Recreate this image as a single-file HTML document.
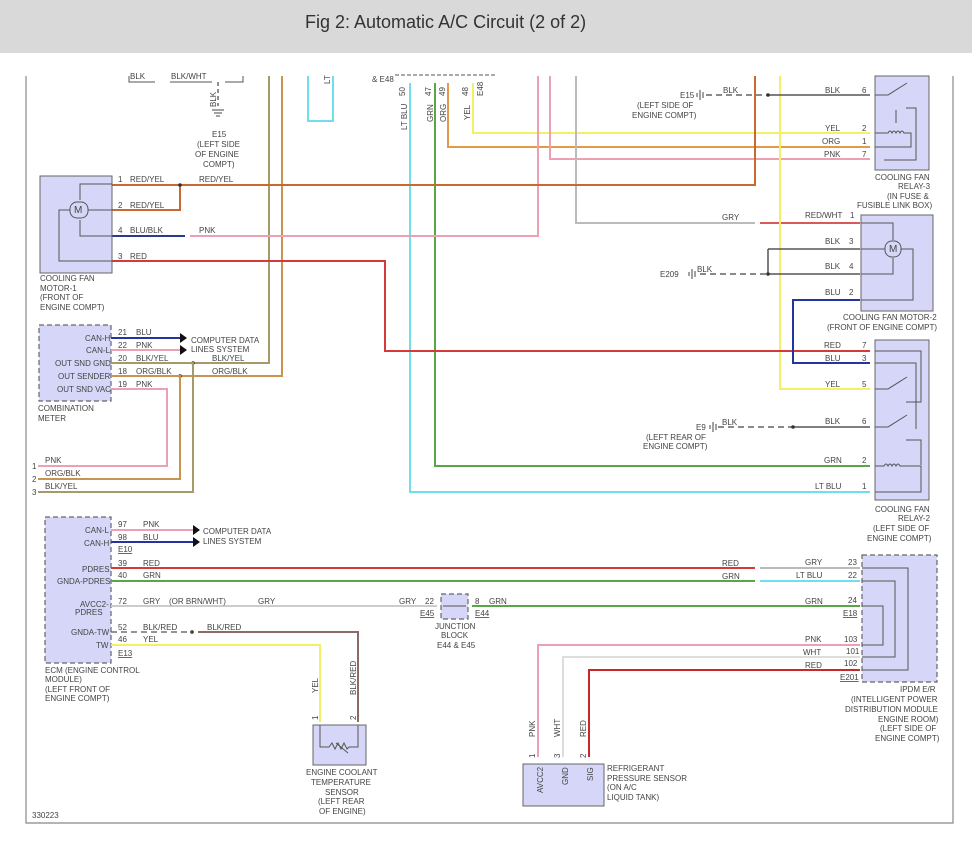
<!DOCTYPE html>
<html><head><meta charset="utf-8"><style>
html,body{margin:0;padding:0;background:#fff;}
.hdr{position:absolute;left:0;top:0;width:972px;height:53px;background:#d9d9d9;}
.hdr span{position:absolute;left:305px;top:12px;font:18px "Liberation Sans",sans-serif;color:#333;}
svg{position:absolute;left:0;top:0;}
text{font-family:"Liberation Sans",sans-serif;font-size:8px;fill:#444;}
.w{fill:none;stroke-width:2;}
.box{fill:#d6d6f8;stroke:#666;stroke-width:1;}
.dbox{fill:#d6d6f8;stroke:#666;stroke-width:1.2;stroke-dasharray:5,3;}
.in{fill:none;stroke:#555;stroke-width:1;}
</style></head><body>
<div class="hdr"><span>Fig 2: Automatic A/C Circuit (2 of 2)</span></div>
<svg width="972" height="850" viewBox="0 0 972 850">
<!-- border -->
<path d="M26 76V823H953V76" fill="none" stroke="#888" stroke-width="1.2"/>
<!-- top left stub -->
<path d="M129 76V82H155M170 82H212M225 82H243V76" class="in"/>
<path d="M218 82V106" stroke="#444" stroke-dasharray="4,3" stroke-width="1.2"/>
<path d="M212 110h12M214 113h8M216 116h4" stroke="#444"/>
<text x="130" y="79">BLK</text><text x="171" y="79">BLK/WHT</text>
<text x="216" y="107" transform="rotate(-90 216 107)">BLK</text>
<text x="212" y="137">E15</text><text x="197" y="147">(LEFT SIDE</text><text x="195" y="157">OF ENGINE</text><text x="203" y="167">COMPT)</text>
<!-- verticals -->
<path class="w" stroke="#a79a6a" d="M269 76V363H193"/>
<path class="w" stroke="#c89550" d="M282 76V376H180"/>
<path class="w" stroke="#6de0ec" d="M308 76V121H333V76"/>
<text x="330" y="84" transform="rotate(-90 330 84)">LT</text>
<path d="M395 75H495" stroke="#555" stroke-dasharray="4,2"/>
<text x="372" y="82">&amp; E48</text>
<text x="405" y="96" transform="rotate(-90 405 96)">50</text>
<text x="431" y="96" transform="rotate(-90 431 96)">47</text>
<text x="445" y="96" transform="rotate(-90 445 96)">49</text>
<text x="468" y="96" transform="rotate(-90 468 96)">48</text>
<text x="483" y="96" transform="rotate(-90 483 96)">E48</text>
<text x="407" y="130" transform="rotate(-90 407 130)">LT BLU</text>
<text x="433" y="122" transform="rotate(-90 433 122)">GRN</text>
<text x="446" y="122" transform="rotate(-90 446 122)">ORG</text>
<text x="470" y="120" transform="rotate(-90 470 120)">YEL</text>
<path class="w" stroke="#6de0ec" d="M410 83V492H870"/>
<path class="w" stroke="#5aa545" d="M435 83V466H870"/>
<path class="w" stroke="#e39a48" d="M448 83V147H870"/>
<path class="w" stroke="#f4f065" d="M473 83V133H870"/>
<path class="w" stroke="#eba0b4" d="M538 76V236H190"/>
<path class="w" stroke="#eba0b4" d="M550 76V159H870"/>
<path class="w" stroke="#bbb" d="M576 76V223H755"/>
<path class="w" stroke="#d85a58" d="M760 223H860"/>
<path class="w" stroke="#c66a30" d="M755 76V185H112"/>
<path class="w" stroke="#f4f065" d="M780 76V389H870"/>
<path class="w" stroke="#c66a30" d="M112 210H180V185"/>
<path class="w" stroke="#2c3a8a" d="M112 236H185"/>
<path class="w" stroke="#d43a3a" d="M112 261H385V351H870"/>
<path class="w" stroke="#2535a0" d="M860 300H793V363H870"/>
<!-- BLK grounds -->
<path d="M706 95H768" stroke="#444" stroke-width="1.3" stroke-dasharray="6,4"/><path d="M768 95H870" stroke="#555" stroke-width="1.5"/>
<path d="M700 274H768" stroke="#444" stroke-width="1.3" stroke-dasharray="6,4"/><path d="M768 249V274H860M768 249H860" stroke="#555" stroke-width="1.5" fill="none"/>
<path d="M718 427H793" stroke="#444" stroke-width="1.3" stroke-dasharray="6,4"/><path d="M793 427H870" stroke="#555" stroke-width="1.5"/>
<g fill="#333"><circle cx="768" cy="95" r="1.8"/><circle cx="768" cy="274" r="1.8"/><circle cx="793" cy="427" r="1.8"/><circle cx="180" cy="185" r="1.8"/><circle cx="193" cy="363" r="1.8"/><circle cx="180" cy="376" r="1.8"/><circle cx="192" cy="632" r="1.8"/></g>
<path d="M700 90v10M703 92v6M697 93v4" stroke="#444"/>
<path d="M692 269v10M695 271v6M689 272v4" stroke="#444"/>
<path d="M713 422v10M716 424v6M710 425v4" stroke="#444"/>
<text x="680" y="98">E15</text><text x="637" y="108">(LEFT SIDE OF</text><text x="632" y="118">ENGINE COMPT)</text><text x="723" y="93">BLK</text>
<text x="660" y="277">E209</text><text x="697" y="272">BLK</text>
<text x="696" y="430">E9</text><text x="722" y="425">BLK</text><text x="646" y="440">(LEFT REAR OF</text><text x="643" y="449">ENGINE COMPT)</text>
<text x="722" y="220">GRY</text>
<!-- relay3 -->
<rect class="box" x="875" y="76" width="54" height="94"/>
<path class="in" d="M875 95L888 95L907 83M896 110V123M906 108H916V160H884M884 133H888q2-4 4 0q2-4 4 0q2-4 4 0q2-4 4 0H911V147H875M875 133h9"/>
<text x="825" y="93">BLK</text><text x="862" y="93">6</text>
<text x="825" y="131">YEL</text><text x="862" y="131">2</text>
<text x="822" y="144">ORG</text><text x="862" y="144">1</text>
<text x="824" y="157">PNK</text><text x="862" y="157">7</text>
<text x="875" y="180">COOLING FAN</text><text x="898" y="189">RELAY-3</text><text x="887" y="199">(IN FUSE &amp;</text><text x="857" y="208">FUSIBLE LINK BOX)</text>
<!-- motor2 -->
<rect class="box" x="861" y="215" width="72" height="96"/>
<path class="in" d="M861 223H893V240M861 249H885M901 249H913V300H861M861 274H893V258"/>
<rect x="885" y="241" width="16" height="16" rx="7" fill="#d6d6f8" stroke="#555"/><text x="889" y="252" style="font-size:10px">M</text>
<text x="805" y="218">RED/WHT</text><text x="850" y="218">1</text>
<text x="825" y="244">BLK</text><text x="849" y="244">3</text>
<text x="825" y="269">BLK</text><text x="849" y="269">4</text>
<text x="825" y="295">BLU</text><text x="849" y="295">2</text>
<text x="843" y="320">COOLING FAN MOTOR-2</text><text x="827" y="330">(FRONT OF ENGINE COMPT)</text>
<!-- relay2 -->
<rect class="box" x="875" y="340" width="54" height="160"/>
<path class="in" d="M875 351H921V402H906M875 363H916V429M875 389L888 389L907 377M875 427L888 427L907 415M906 440H921V465M875 466H884q2-4 4 0q2-4 4 0q2-4 4 0q2-4 4 0H921V492H875"/>
<text x="824" y="348">RED</text><text x="862" y="348">7</text>
<text x="825" y="361">BLU</text><text x="862" y="361">3</text>
<text x="825" y="387">YEL</text><text x="862" y="387">5</text>
<text x="825" y="424">BLK</text><text x="862" y="424">6</text>
<text x="824" y="463">GRN</text><text x="862" y="463">2</text>
<text x="815" y="489">LT BLU</text><text x="862" y="489">1</text>
<text x="875" y="512">COOLING FAN</text><text x="898" y="521">RELAY-2</text><text x="873" y="531">(LEFT SIDE OF</text><text x="867" y="541">ENGINE COMPT)</text>
<!-- motor1 -->
<rect class="box" x="40" y="176" width="72" height="97"/>
<path class="in" d="M112 184H80V200M72 210H59V261H112M88 210H112M112 236H80V220"/>
<rect x="70" y="202" width="18" height="16" rx="7" fill="#d6d6f8" stroke="#555"/><text x="74" y="213" style="font-size:10px">M</text>
<text x="118" y="182">1</text><text x="130" y="182">RED/YEL</text><text x="199" y="182">RED/YEL</text>
<text x="118" y="208">2</text><text x="130" y="208">RED/YEL</text>
<text x="118" y="233">4</text><text x="130" y="233">BLU/BLK</text><text x="199" y="233">PNK</text>
<text x="118" y="259">3</text><text x="130" y="259">RED</text>
<text x="40" y="281">COOLING FAN</text><text x="40" y="291">MOTOR-1</text><text x="40" y="300">(FRONT OF</text><text x="40" y="310">ENGINE COMPT)</text>
<!-- combination meter -->
<rect class="dbox" x="39" y="325" width="72" height="76"/>
<text x="85" y="341">CAN-H</text><text x="86" y="353">CAN-L</text><text x="55" y="366">OUT SND GND</text><text x="58" y="379">OUT SENDER</text><text x="57" y="392">OUT SND VAC</text>
<path class="w" stroke="#2535a0" d="M111 338H180"/><path d="M180 333l7 5-7 5z" fill="#111"/>
<path class="w" stroke="#eba0b4" d="M111 350H180"/><path d="M180 345l7 5-7 5z" fill="#111"/>
<path class="w" stroke="#a79a6a" d="M111 363H193V492H38"/>
<path class="w" stroke="#c89550" d="M111 376H180V479H38"/>
<path class="w" stroke="#eba0b4" d="M111 389H167V466H38"/>
<text x="118" y="335">21</text><text x="136" y="335">BLU</text><text x="118" y="348">22</text><text x="136" y="348">PNK</text>
<text x="118" y="361">20</text><text x="136" y="361">BLK/YEL</text><text x="212" y="361">BLK/YEL</text>
<text x="118" y="374">18</text><text x="136" y="374">ORG/BLK</text><text x="212" y="374">ORG/BLK</text>
<text x="118" y="387">19</text><text x="136" y="387">PNK</text>
<text x="191" y="343">COMPUTER DATA</text><text x="191" y="352">LINES SYSTEM</text>
<text x="38" y="411">COMBINATION</text><text x="38" y="421">METER</text>
<text x="32" y="469">1</text><text x="45" y="463">PNK</text><text x="32" y="482">2</text><text x="45" y="476">ORG/BLK</text><text x="32" y="495">3</text><text x="45" y="489">BLK/YEL</text>
<!-- ECM -->
<rect class="dbox" x="45" y="517" width="66" height="146"/>
<text x="85" y="533">CAN-L</text><text x="84" y="546">CAN-H</text><text x="82" y="572">PDRES</text><text x="57" y="584">GNDA-PDRES</text><text x="80" y="607">AVCC2-</text><text x="75" y="615">PDRES</text><text x="71" y="635">GNDA-TW</text><text x="96" y="648">TW</text>
<path class="w" stroke="#eba0b4" d="M111 530H193"/><path d="M193 525l7 5-7 5z" fill="#111"/>
<path class="w" stroke="#2535a0" d="M111 542H193"/><path d="M193 537l7 5-7 5z" fill="#111"/>
<path class="w" stroke="#d43a3a" d="M111 568H755"/><path class="w" stroke="#bbb" d="M760 568H860"/>
<path class="w" stroke="#5aa545" d="M111 581H755"/><path class="w" stroke="#6de0ec" d="M760 581H860"/>
<path class="w" stroke="#ccc" d="M111 606H437"/><path class="w" stroke="#5aa545" d="M472 606H860"/>
<path d="M111 632H192" stroke="#555" stroke-width="1.3" stroke-dasharray="6,4"/><path class="w" stroke="#8c6a68" d="M198 632H358V722"/>
<path class="w" stroke="#f4f065" d="M111 645H320V722"/>
<text x="118" y="527">97</text><text x="143" y="527">PNK</text><text x="118" y="540">98</text><text x="143" y="540">BLU</text>
<text x="118" y="552" text-decoration="underline">E10</text>
<text x="203" y="534">COMPUTER DATA</text><text x="203" y="544">LINES SYSTEM</text>
<text x="118" y="566">39</text><text x="143" y="566">RED</text><text x="118" y="578">40</text><text x="143" y="578">GRN</text>
<text x="118" y="604">72</text><text x="143" y="604">GRY</text><text x="169" y="604">(OR BRN/WHT)</text><text x="258" y="604">GRY</text>
<text x="118" y="630">52</text><text x="143" y="630">BLK/RED</text><text x="207" y="630">BLK/RED</text>
<text x="118" y="642">46</text><text x="143" y="642">YEL</text>
<text x="118" y="656" text-decoration="underline">E13</text>
<text x="45" y="673">ECM (ENGINE CONTROL</text><text x="45" y="682">MODULE)</text><text x="45" y="692">(LEFT FRONT OF</text><text x="45" y="701">ENGINE COMPT)</text>
<!-- junction block -->
<rect class="dbox" x="441" y="594" width="27" height="25"/>
<path class="in" d="M443 606H466"/>
<text x="399" y="604">GRY</text><text x="425" y="604">22</text><text x="420" y="616" text-decoration="underline">E45</text>
<text x="475" y="604">8</text><text x="475" y="616" text-decoration="underline">E44</text><text x="489" y="604">GRN</text>
<text x="435" y="629">JUNCTION</text><text x="441" y="638">BLOCK</text><text x="437" y="648">E44 &amp; E45</text>
<!-- coolant sensor -->
<rect class="box" x="313" y="725" width="53" height="40"/>
<path class="in" d="M320 725V747H329l3-4 3 6 3-6 3 6 3-6 3 6 2-2H358V725M336 743l12 10"/>
<text x="318" y="693" transform="rotate(-90 318 693)">YEL</text>
<text x="356" y="695" transform="rotate(-90 356 695)">BLK/RED</text>
<text x="318" y="720" transform="rotate(-90 318 720)">1</text><text x="356" y="720" transform="rotate(-90 356 720)">2</text>
<text x="306" y="775">ENGINE COOLANT</text><text x="311" y="785">TEMPERATURE</text><text x="325" y="795">SENSOR</text><text x="318" y="804">(LEFT REAR</text><text x="319" y="814">OF ENGINE)</text>
<text x="32" y="818">330223</text>
<!-- IPDM -->
<rect class="dbox" x="862" y="555" width="75" height="127"/>
<path class="in" d="M862 568H908V670H862M862 581H895V657H862M862 606H883V645H862"/>
<path class="w" stroke="#eba0b4" d="M860 645H538V757"/>
<path class="w" stroke="#ddd" d="M860 657H563V757"/>
<path class="w" stroke="#c8282a" d="M860 670H589V757"/>
<text x="722" y="566">RED</text><text x="805" y="565">GRY</text><text x="848" y="565">23</text>
<text x="722" y="579">GRN</text><text x="796" y="578">LT BLU</text><text x="848" y="578">22</text>
<text x="805" y="604">GRN</text><text x="848" y="603">24</text><text x="843" y="616" text-decoration="underline">E18</text>
<text x="805" y="642">PNK</text><text x="844" y="642">103</text>
<text x="803" y="655">WHT</text><text x="846" y="654">101</text>
<text x="805" y="668">RED</text><text x="844" y="666">102</text><text x="840" y="680" text-decoration="underline">E201</text>
<text x="900" y="692">IPDM E/R</text><text x="851" y="702">(INTELLIGENT POWER</text><text x="845" y="712">DISTRIBUTION MODULE</text><text x="878" y="722">ENGINE ROOM)</text><text x="880" y="731">(LEFT SIDE OF</text><text x="875" y="741">ENGINE COMPT)</text>
<!-- refrigerant sensor -->
<rect class="box" x="523" y="764" width="81" height="42"/>
<text x="535" y="737" transform="rotate(-90 535 737)">PNK</text><text x="560" y="737" transform="rotate(-90 560 737)">WHT</text><text x="586" y="737" transform="rotate(-90 586 737)">RED</text>
<text x="535" y="758" transform="rotate(-90 535 758)">1</text><text x="560" y="758" transform="rotate(-90 560 758)">3</text><text x="586" y="758" transform="rotate(-90 586 758)">2</text>
<text x="543" y="793" transform="rotate(-90 543 793)">AVCC2</text><text x="568" y="785" transform="rotate(-90 568 785)">GND</text><text x="593" y="781" transform="rotate(-90 593 781)">SIG</text>
<text x="607" y="771">REFRIGERANT</text><text x="607" y="781">PRESSURE SENSOR</text><text x="607" y="790">(ON A/C</text><text x="607" y="800">LIQUID TANK)</text>
</svg>
</body></html>
